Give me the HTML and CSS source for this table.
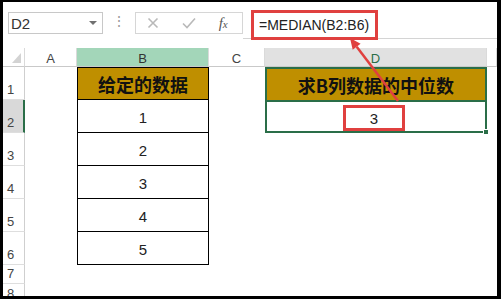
FILE: index.html
```html
<!DOCTYPE html>
<html lang="zh">
<head>
<meta charset="utf-8">
<title>MEDIAN</title>
<link rel="stylesheet" href="styles.css">
</head>
<body>
<div class="frame">
  <div class="fbar">
    <div class="namebox"><span>D2</span><span class="dd"></span></div>
    <div class="dots">⋮</div>
    <div class="fbtns">
      <svg class="ic" width="12" height="12" viewBox="0 0 12 12"><path d="M1.5 1.5 L10.5 10.5 M10.5 1.5 L1.5 10.5" stroke="#b9b9b9" stroke-width="1.6" fill="none"/></svg>
      <svg class="ic" width="14" height="12" viewBox="0 0 14 12"><path d="M1 6.5 L5 10.5 L13 1.5" stroke="#b9b9b9" stroke-width="1.6" fill="none"/></svg>
      <span class="fx">f<span class="fxs">x</span></span>
    </div>
    <div class="finput"><div class="formula">=MEDIAN(B2:B6)</div></div>
  </div>
  <div class="sheet">
    <div class="ch corner"><span class="tri"></span></div>
    <div class="ch">A</div>
    <div class="ch colsel">B</div>
    <div class="ch">C</div>
    <div class="ch colact">D</div>
    <div class="ch"></div>

    <div class="rh">1</div>
    <div class="c"></div>
    <div class="b top">给定的数据</div>
    <div class="c"></div>
    <div class="d1">求B列数据的中位数</div>
    <div class="c"></div>

    <div class="rh sel">2</div>
    <div class="c"></div>
    <div class="b">1</div>
    <div class="c"></div>
    <div class="d2"><div class="box">3</div><span class="handle"></span></div>
    <div class="c"></div>

    <div class="rh">3</div>
    <div class="c"></div>
    <div class="b">2</div>
    <div class="c"></div>
    <div class="c"></div>
    <div class="c"></div>

    <div class="rh">4</div>
    <div class="c"></div>
    <div class="b">3</div>
    <div class="c"></div>
    <div class="c"></div>
    <div class="c"></div>

    <div class="rh">5</div>
    <div class="c"></div>
    <div class="b">4</div>
    <div class="c"></div>
    <div class="c"></div>
    <div class="c"></div>

    <div class="rh">6</div>
    <div class="c"></div>
    <div class="b">5</div>
    <div class="c"></div>
    <div class="c"></div>
    <div class="c"></div>

    <div class="rh">7</div>
    <div class="c"></div>
    <div class="c"></div>
    <div class="c"></div>
    <div class="c"></div>
    <div class="c"></div>

    <div class="rh last">8</div>
    <div class="c"></div>
    <div class="c"></div>
    <div class="c"></div>
    <div class="c"></div>
    <div class="c"></div>
  </div>
</div>
<svg class="arrow" width="503" height="301" viewBox="0 0 503 301">
  <line x1="398" y1="101" x2="356.7" y2="46.7" stroke="#e0403f" stroke-width="2.5"/>
  <polygon points="350,38 360.6,43.7 352.7,49.8" fill="#e0403f"/>
</svg>
</body>
</html>
```
FILE: styles.css
```css
* { box-sizing: border-box; margin: 0; padding: 0; }
html, body { width: 503px; height: 301px; overflow: hidden; background: #fff; }
body { position: relative; font-family: "Liberation Sans", "Noto Sans CJK SC", sans-serif; color: #222; }

.frame {
  width: 501px; height: 299px;
  border-style: solid; border-color: #000;
  border-width: 2px 4px 3px 3px;
  overflow: hidden;
  display: flex; flex-direction: column;
}

/* formula bar */
.fbar { flex: none; height: 37px; display: flex; align-items: flex-start; padding-left: 5px; }
.namebox {
  margin-top: 10px; width: 95px; height: 22px;
  border: 1px solid #c8c8c8;
  display: flex; align-items: center; justify-content: space-between;
  padding: 0 5px 0 2px; font-size: 15px; color: #333;
}
.dd { width: 0; height: 0; border-left: 4px solid transparent; border-right: 4px solid transparent; border-top: 4px solid #707070; }
.dots { width: 32px; text-align: center; margin-top: 11px; line-height: 16px; font-size: 14px; color: #9a9a9a; }
.fbtns {
  margin-top: 10px; width: 108px; height: 22px;
  border: 1px solid #d6d6d6;
  display: flex; align-items: center; justify-content: space-around;
}
.fx { font-family: "Liberation Serif", serif; font-style: italic; font-size: 15px; color: #555; width: 12px; }
.fxs { font-size: 11px; }
.finput { flex: 1; align-self: stretch; border-bottom: 1px solid #d4d4d4; padding-left: 8px; }
.formula {
  margin-top: 8px; width: 127px; height: 30px;
  border: 3px solid #e0403f;
  display: flex; align-items: center; padding-left: 5px;
  font-size: 14px; color: #222; background: #fff;
}

/* sheet */
.sheet {
  flex: 1; margin-top: 9px;
  display: grid;
  grid-template-columns: 22px 52px 132px 56px 222px 1fr;
  grid-template-rows: 19px repeat(6, 33px) 19px 1fr;
}
.ch {
  border-bottom: 1px solid #c9c9c9; border-right: 1px solid #dadada;
  display: flex; align-items: center; justify-content: center;
  padding-top: 2px; font-size: 13px; color: #444;
}
.corner { justify-content: flex-end; align-items: flex-end; padding: 0 3px 3px 0; }
.tri { width: 0; height: 0; border-left: 9px solid transparent; border-bottom: 10px solid #d3d3d3; }
.colsel { background: #a3d6b9; color: #333; }
.colact { background: #e1e1e1; color: #2a6e48; }

.rh {
  border-right: 1px solid #cfcfcf; border-bottom: 1px solid #dedede;
  display: flex; align-items: flex-end;
  padding: 0 0 2px 4px; font-size: 13px; color: #444;
}
.rh.sel { background: #d9d9d9; border-right: 2px solid #2a6e48; }
.rh.last { align-items: flex-start; padding-top: 2px; }

.b {
  border-left: 1px solid #000; border-right: 1px solid #000; border-bottom: 1px solid #000;
  display: flex; align-items: center; justify-content: center;
  padding-top: 3px; font-size: 15px; color: #222;
}
.b.top {
  border-top: 1px solid #000; background: #bf8f00; padding-top: 0;
  font-family: "Noto Sans CJK SC", sans-serif; font-weight: 700; font-size: 18px; color: #111;
}
.d1 {
  background: #bf8f00; border: 2px solid #2a6e48; border-bottom: none;
  display: flex; align-items: center; justify-content: center;
  font-family: "Noto Sans CJK SC", sans-serif; font-weight: 700; font-size: 18px; color: #111;
}
.d2 {
  position: relative; border: 2px solid #2a6e48;
  display: flex; justify-content: center; align-items: flex-start;
  padding: 3px 4px 0 0;
}
.box {
  width: 62px; height: 26px; border: 3px solid #e0403f;
  display: flex; align-items: center; justify-content: center;
  font-size: 15px; color: #222;
}
.handle {
  position: absolute; right: -4px; bottom: -4px;
  width: 6px; height: 6px; background: #2a6e48; border: 1px solid #fff;
}

.arrow { position: absolute; left: 0; top: 0; pointer-events: none; }
```
